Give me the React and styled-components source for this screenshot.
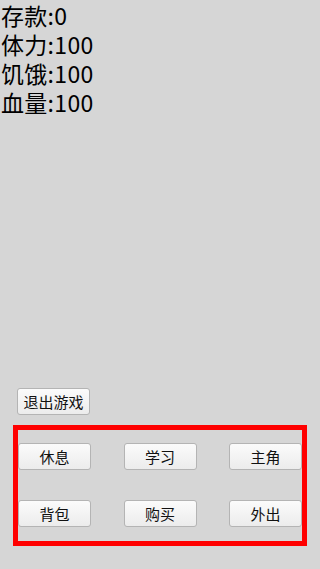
import React from 'react'
import styled, { createGlobalStyle } from 'styled-components'

const GlobalStyle = createGlobalStyle`
    html, body {
        margin: 0;
        padding: 0;
        background: #d6d6d6;
    }
    * {
        box-sizing: border-box;
    }
`

const Screen = styled.div`
    width: 320px;
    height: 569px;
    background: #d6d6d6;
    display: flex;
    flex-direction: column;
    font-family: "Noto Sans CJK SC", "Noto Sans", sans-serif;
    color: #000;
    overflow: hidden;
`

const Stats = styled.div`
    display: flex;
    flex-direction: column;
    padding-top: 1px;
`

const StatLine = styled.div`
    font-size: 23px;
    line-height: 29px;
    height: 29px;
    padding-left: 1px;
    white-space: nowrap;
    letter-spacing: 0.3px;
`

const Spacer = styled.div`
    flex: 1;
`

const GameButton = styled.button`
    width: 73px;
    height: 27px;
    padding: 0;
    border: 1px solid #b4b4b4;
    border-radius: 3px;
    background: linear-gradient(to bottom, #fbfbfb, #ececec);
    font-family: "Noto Sans CJK SC", sans-serif;
    font-size: 15px;
    line-height: 25px;
    color: #111;
    cursor: pointer;
`

const ExitRow = styled.div`
    padding-left: 17px;
    margin-bottom: 10px;
`

const ActionBox = styled.div`
    margin: 0 0 23px 13px;
    width: 294px;
    height: 121px;
    border: 5px solid #ff0000;
    padding: 13px 0 0 0;
    display: flex;
    flex-direction: column;
    gap: 30px;
`

const ActionRow = styled.div`
    display: flex;
    justify-content: space-between;
`

const stats = [
    ['存款', 0],
    ['体力', 100],
    ['饥饿', 100],
    ['血量', 100],
]

const rows = [
    ['休息', '学习', '主角'],
    ['背包', '购买', '外出'],
]

export default function App() {
    return (
        <>
            <GlobalStyle />
            <Screen>
                <Stats>
                    {stats.map(([label, value]) => (
                        <StatLine key={label}>{label}:{value}</StatLine>
                    ))}
                </Stats>
                <Spacer />
                <ExitRow>
                    <GameButton>退出游戏</GameButton>
                </ExitRow>
                <ActionBox>
                    {rows.map((row, i) => (
                        <ActionRow key={i}>
                            {row.map(name => (
                                <GameButton key={name}>{name}</GameButton>
                            ))}
                        </ActionRow>
                    ))}
                </ActionBox>
            </Screen>
        </>
    )
}
